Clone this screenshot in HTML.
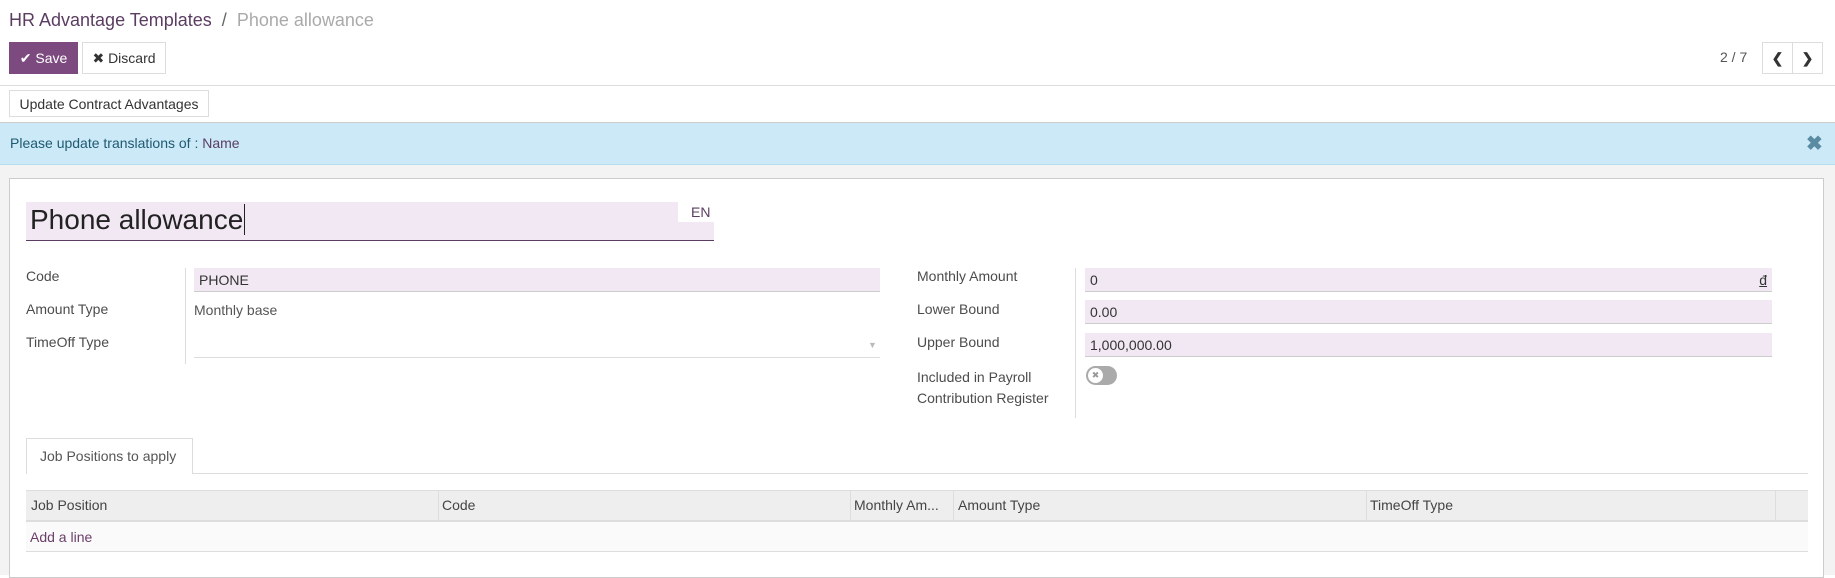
<!DOCTYPE html>
<html><head><meta charset="utf-8"><style>
*{box-sizing:border-box;margin:0;padding:0}
body{width:1835px;height:575px;overflow:hidden;background:#fff;font-family:"Liberation Sans",sans-serif;font-size:14px;color:#4c4c4c;position:relative}
.a{position:absolute}
.inp{position:absolute;background:#f1e8f3;border-bottom:1px solid #ccc;height:24px;padding:4px 5px;color:#333}
.lbl{position:absolute;color:#4c4c4c;font-size:14px}
.btn{position:absolute;border:1px solid #ddd;background:#fff;color:#333;font-size:14px;display:flex;align-items:center;justify-content:center}
</style></head><body>
<div class="a" style="left:9px;top:10px;font-size:18px;color:#5b3d62">HR Advantage Templates <span style="color:#666">&nbsp;/&nbsp;</span> <span style="color:#aaa">Phone allowance</span></div>
<div class="btn" style="left:9px;top:42px;width:69px;height:32px;background:#7c4a7e;border-color:#7c4a7e;color:#fff">✔&nbsp;Save</div>
<div class="btn" style="left:82px;top:42px;width:84px;height:32px">✖&nbsp;Discard</div>
<div class="a" style="left:1720px;top:49px;color:#555">2 / 7</div>
<div class="btn" style="left:1762px;top:42px;width:31px;height:32px;font-weight:bold">&#10094;</div>
<div class="btn" style="left:1792px;top:42px;width:31px;height:32px;font-weight:bold">&#10095;</div>
<div class="a" style="left:0;top:85px;width:1835px;height:1px;background:#ddd"></div>
<div class="btn" style="left:9px;top:90px;width:200px;height:27px">Update Contract Advantages</div>
<div class="a" style="left:0;top:122px;width:1835px;height:1px;background:#ccc"></div>
<div class="a" style="left:0;top:123px;width:1835px;height:42px;background:#cce9f8;border-bottom:1px solid #b6dcef"></div>
<div class="a" style="left:10px;top:135px;color:#1e5a70">Please update translations of : <span style="color:#5b3d62">Name</span></div>
<div class="a" style="left:1806px;top:131px;color:#5b8ba3;font-size:20px;font-weight:bold">✖</div>
<div class="a" style="left:0;top:165px;width:1835px;height:410px;background:#f3f3f3"></div>
<div class="a" style="left:9px;top:178px;width:1815px;height:400px;background:#fff;border:1px solid #ccc"></div>
<div class="a" style="left:26px;top:202px;width:688px;height:39px;background:#f1e8f3;border-bottom:1px solid #5b3d62"></div>
<div class="a" style="left:678px;top:202px;width:36px;height:20px;background:#fff"></div>
<div class="a" style="left:30px;top:204px;font-size:28px;color:#222">Phone allowance<span style="border-left:1.5px solid #222;margin-left:1px"></span></div>
<div class="a" style="left:691px;top:204px;color:#5b3d62">EN</div>
<div class="lbl" style="left:26px;top:268px">Code</div>
<div class="lbl" style="left:26px;top:301px">Amount Type</div>
<div class="lbl" style="left:26px;top:334px">TimeOff Type</div>
<div class="a" style="left:185px;top:268px;width:1px;height:96px;background:#ddd"></div>
<div class="inp" style="left:194px;top:268px;width:686px">PHONE</div>
<div class="a" style="left:194px;top:302px;color:#555">Monthly base</div>
<div class="a" style="left:194px;top:334px;width:686px;height:24px;border-bottom:1px solid #ddd"></div>
<div class="a" style="left:868px;top:340px;color:#bbb;font-size:9px">▼</div>
<div class="lbl" style="left:917px;top:268px">Monthly Amount</div>
<div class="lbl" style="left:917px;top:301px">Lower Bound</div>
<div class="lbl" style="left:917px;top:334px">Upper Bound</div>
<div class="lbl" style="left:917px;top:367px;line-height:21px">Included in Payroll<br>Contribution Register</div>
<div class="a" style="left:1075px;top:268px;width:1px;height:150px;background:#ddd"></div>
<div class="inp" style="left:1085px;top:268px;width:687px">0<span style="float:right;text-decoration:underline">đ</span></div>
<div class="inp" style="left:1085px;top:300px;width:687px">0.00</div>
<div class="inp" style="left:1085px;top:333px;width:687px">1,000,000.00</div>
<div class="a" style="left:1086px;top:366px;width:31px;height:19px;border-radius:10px;background:#aaa"></div>
<div class="a" style="left:1088px;top:368px;width:15px;height:15px;border-radius:50%;background:#fff;color:#999;font-size:9px;text-align:center;line-height:15px">✖</div>
<div class="a" style="left:26px;top:473px;width:1782px;height:1px;background:#ddd"></div>
<div class="a" style="left:26px;top:438px;width:167px;height:36px;background:#fff;border:1px solid #ddd;border-bottom:none;padding:9px 13px;color:#555">Job Positions to apply</div>
<div class="a" style="left:26px;top:490px;width:1782px;height:32px;background:#eee;border-top:1px solid #ddd;border-bottom:2px solid #ddd"></div>
<div class="a" style="left:438px;top:490px;width:1px;height:31px;background:#ddd"></div>
<div class="a" style="left:850px;top:490px;width:1px;height:31px;background:#ddd"></div>
<div class="a" style="left:953px;top:490px;width:1px;height:31px;background:#ddd"></div>
<div class="a" style="left:1366px;top:490px;width:1px;height:31px;background:#ddd"></div>
<div class="a" style="left:1775px;top:490px;width:1px;height:31px;background:#ddd"></div>
<div class="a" style="left:31px;top:497px;color:#444">Job Position</div>
<div class="a" style="left:442px;top:497px;color:#444">Code</div>
<div class="a" style="left:854px;top:497px;color:#444">Monthly Am...</div>
<div class="a" style="left:958px;top:497px;color:#444">Amount Type</div>
<div class="a" style="left:1370px;top:497px;color:#444">TimeOff Type</div>
<div class="a" style="left:26px;top:522px;width:1782px;height:30px;background:#fafafa;border-bottom:1px solid #ddd"></div>
<div class="a" style="left:30px;top:529px;color:#6b3e6a">Add a line</div>
</body></html>
